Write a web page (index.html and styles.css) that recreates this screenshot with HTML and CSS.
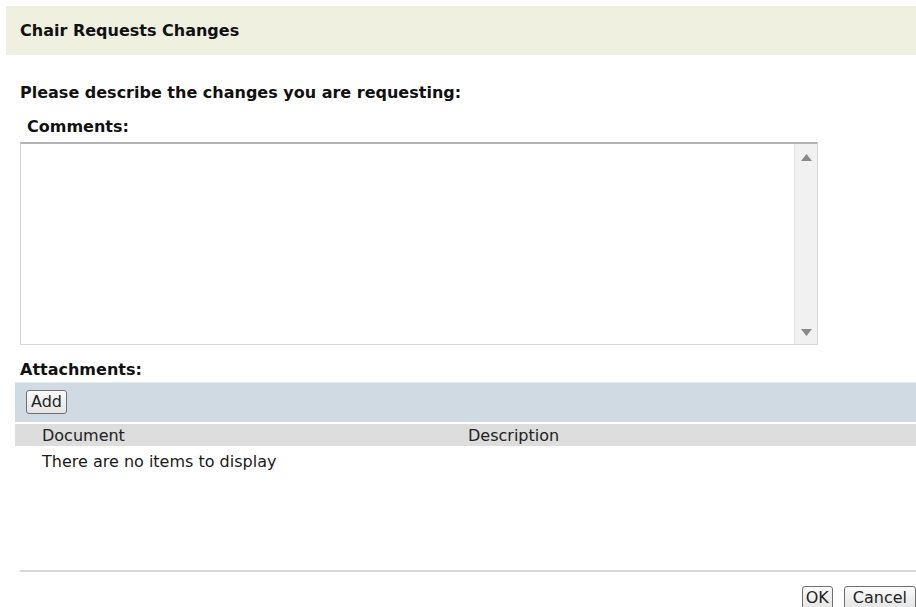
FILE: index.html
```html
<!DOCTYPE html>
<html lang="en">
<head>
<meta charset="utf-8">
<title>Chair Requests Changes</title>
<link rel="stylesheet" href="styles.css">
</head>
<body>
<div class="dialog">
  <div class="dialog-title">Chair Requests Changes</div>

  <div class="form">
    <p class="prompt">Please describe the changes you are requesting:</p>
    <label class="field-label" for="comments">Comments:</label>
    <div class="comments-box">
      <textarea id="comments" class="comments-input"></textarea>
      <div class="vscroll">
        <svg class="arrow" width="11" height="7" viewBox="0 0 11 7"><path d="M5.5 0 L11 7 L0 7 Z" fill="#8a8a8a"/></svg>
        <svg class="arrow" width="11" height="7" viewBox="0 0 11 7"><path d="M0 0 L11 0 L5.5 7 Z" fill="#8a8a8a"/></svg>
      </div>
    </div>

    <div class="attach-label">Attachments:</div>
  </div>

  <div class="attachments">
    <div class="toolbar">
      <button class="btn" type="button">Add</button>
    </div>
    <div class="grid-head">
      <span class="col-doc">Document</span>
      <span class="col-desc">Description</span>
    </div>
    <div class="grid-empty">There are no items to display</div>
  </div>

  <div class="footer">
    <button class="btn btn-ok" type="button">OK</button>
    <button class="btn btn-cancel" type="button">Cancel</button>
  </div>
</div>
</body>
</html>
```

FILE: styles.css
```css
html, body {
  margin: 0;
  padding: 0;
  background: #ffffff;
}

body {
  font-family: "DejaVu Sans", Verdana, sans-serif;
  font-size: 16px;
  color: #1a1a1a;
  overflow: hidden;
}

.dialog {
  padding-top: 6px;
}

.dialog-title {
  margin-left: 6px;
  height: 49px;
  background: #f0f0e1;
  padding-left: 14px;
  display: flex;
  align-items: center;
  font-weight: bold;
  font-size: 16px;
  color: #111;
}

.form {
  padding-left: 20px;
}

.prompt {
  margin: 29px 0 0 0;
  font-weight: bold;
  line-height: 18px;
  color: #111;
}

.field-label {
  display: block;
  margin: 16px 0 0 7px;
  font-weight: bold;
  line-height: 18px;
  color: #111;
}

.comments-box {
  margin-top: 6px;
  width: 798px;
  height: 203px;
  box-sizing: border-box;
  border: 1px solid #d6d8da;
  border-top: 2px solid #b4b4b8;
  display: flex;
  background: #fff;
}

.comments-input {
  flex: 1;
  border: 0;
  margin: 0;
  padding: 2px;
  resize: none;
  outline: none;
  font: inherit;
  background: #fff;
}

.vscroll {
  width: 22px;
  background: #f1f1f1;
  border-left: 1px solid #e6e6e6;
  display: flex;
  flex-direction: column;
  justify-content: space-between;
  align-items: center;
  padding: 10px 0 8px;
}

.arrow {
  display: block;
}

.attach-label {
  margin-top: 16px;
  font-weight: bold;
  line-height: 18px;
  color: #111;
}

.attachments {
  margin-left: 15px;
  margin-top: 3px;
}

.toolbar {
  height: 40px;
  box-sizing: border-box;
  background: #d0dae3;
  border-top: 1px solid #e4eaef;
  padding: 7px 0 0 11px;
}

.btn {
  font-family: "DejaVu Sans", Verdana, sans-serif;
  font-size: 16px;
  color: #222;
  background: linear-gradient(#fbfbfb, #e4e4e4);
  border: 1px solid #6f6f6f;
  border-radius: 3px;
  padding: 0 4px;
  height: 24px;
  line-height: 20px;
  margin: 0;
}

.grid-head {
  margin-top: 2px;
  height: 22px;
  background: #dcdddc;
  display: flex;
  align-items: center;
  color: #222;
}

.col-doc {
  padding-left: 27px;
  width: 399px;
}

.col-desc {
  padding-left: 27px;
}

.grid-empty {
  padding-left: 27px;
  line-height: 18px;
  margin-top: 7px;
}

.footer {
  margin: 99px 0 0 20px;
  border-top: 2px solid #d8d8d8;
  padding-top: 14px;
  display: flex;
  justify-content: flex-end;
  gap: 11px;
}

.btn-ok {
  padding: 0 3px;
}

.btn-cancel {
  padding: 0 8px;
}
```
